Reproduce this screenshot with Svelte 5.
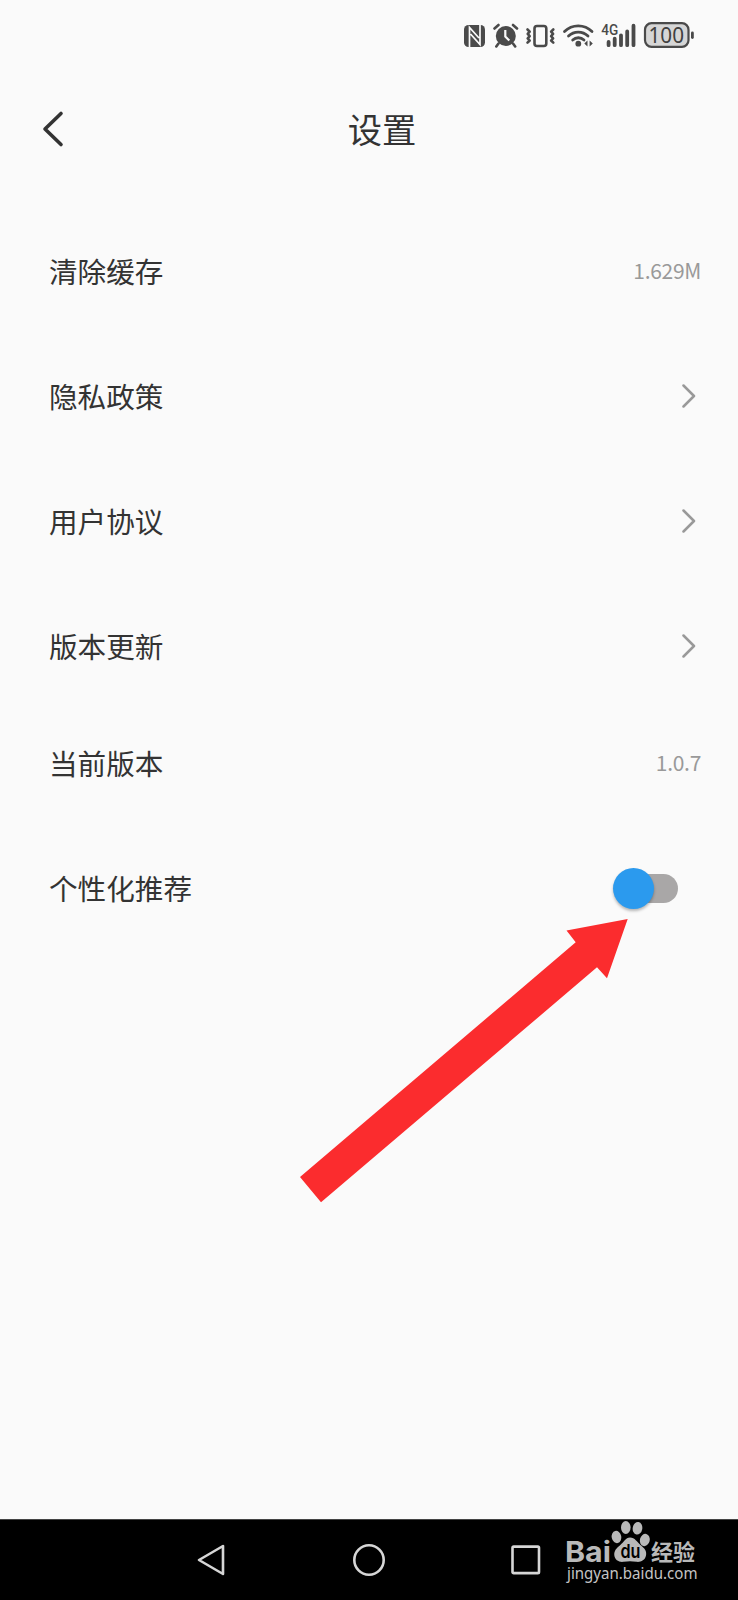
<script lang="ts">
	type Row = { label: string; value?: string; toggle?: boolean };

	// Second group sits slightly tighter to the first than the row pitch.
	const groups: Row[][] = [
		[
			{ label: '清除缓存', value: '1.629M' },
			{ label: '隐私政策' },
			{ label: '用户协议' },
			{ label: '版本更新' }
		],
		[
			{ label: '当前版本', value: '1.0.7' },
			{ label: '个性化推荐', toggle: true }
		]
	];

	let personalised = $state(false);
</script>

<div class="screen">
	<div class="status">
		<svg class="status-icons" width="240" height="32" viewBox="460 20 240 32" aria-hidden="true">
			<!-- NFC -->
			<rect x="464" y="25" width="21" height="22" rx="4.5" fill="#4a4a4a" />
			<path d="M469.500 47v-19.500l9.500 10.500M480 25v19.500l-9.500-10.500" fill="none" stroke="#fafafa" stroke-width="1.700" />
			<!-- Alarm -->
			<circle cx="505.800" cy="36" r="10" fill="#4a4a4a" />
			<path d="M494.500 28.500l4-3.500M517 28.500l-4-3.500M498.500 43.500l-2.200 3M513 43.500l2.200 3" class="line" />
			<path d="M505.300 30v6.500l4 4" fill="none" stroke="#fafafa" stroke-width="2.200" />
			<!-- Vibrate -->
			<rect x="534.500" y="26" width="11.800" height="20" rx="2.500" class="line" />
			<path d="M527.500 29.500l2.200 2.200-2 2.200 2 2.200-2 2.200 2 2.200-2.200 2.200M553.300 29.500l-2.200 2.200 2 2.200-2 2.200 2 2.200-2 2.200 2.200 2.200" class="line" />
			<!-- Wi-Fi -->
			<path d="M564.500 31.500a19.500 19.500 0 0 1 27.500 0M568.500 36a14 14 0 0 1 19.500 0M572.700 40a8.200 8.200 0 0 1 11.300 0" class="line wifi" />
			<circle cx="578.300" cy="43.700" r="2.900" fill="#4a4a4a" />
			<path d="M584.300 43.500l3.200-3v6zM592.800 43.500l-3.200-3v6z" fill="#4a4a4a" />
			<!-- Signal -->
			<text x="601.300" y="35" class="net" textLength="17" lengthAdjust="spacingAndGlyphs">4G</text>
			<path d="M608.600 42v3.200M614.700 38.700v6.500M621 35.300v9.900M627.200 31.500v13.700M633.500 25.700v19.500" class="line bars" />
			<!-- Battery -->
			<rect x="645" y="23.200" width="43.500" height="23.600" rx="6.500" fill="#d6d6d6" stroke="#4a4a4a" stroke-width="2.200" />
			<text x="648.500" y="42.600" class="charge" textLength="35.500" lengthAdjust="spacingAndGlyphs">100</text>
			<path d="M692.400 33v4.500" class="line bars nub" />
		</svg>
	</div>

	<header class="header">
		<button type="button" class="back" aria-label="返回">
			<svg width="24" height="40" viewBox="0 0 24 40">
				<path d="M21 4.500L5 20 21 35.500" />
			</svg>
		</button>
		<h1>设置</h1>
	</header>

	<main class="list">
		{#each groups as group}
			<section class="group">
				{#each group as row (row.label)}
					<div class="row">
						<span class="label">{row.label}</span>
						{#if row.value}
							<span class="value">{row.value}</span>
						{:else if row.toggle}
							<button
								type="button"
								class="switch"
								class:on={personalised}
								role="switch"
								aria-checked={personalised}
								aria-label={row.label}
								onclick={() => (personalised = !personalised)}
							>
								<span class="thumb"></span>
							</button>
						{:else}
							<svg class="chevron" width="14" height="26" viewBox="0 0 14 26">
								<path d="M1.500 2.500L12 13 1.500 23.500" />
							</svg>
						{/if}
					</div>
				{/each}
			</section>
		{/each}
	</main>

	<nav class="nav">
		<svg width="30" height="36" viewBox="0 0 30 36">
			<path d="M28 4v28L4 18z" />
		</svg>
		<svg width="36" height="36" viewBox="0 0 36 36">
			<circle cx="18" cy="18" r="14.700" />
		</svg>
		<svg width="32" height="36" viewBox="0 0 32 36">
			<rect x="-.5" y="4.600" width="26.500" height="26.500" rx="1.200" />
		</svg>
	</nav>

	<!-- Pointer drawn over the list, aimed at the switch -->
	<svg class="arrow" width="330" height="286" viewBox="299 918 330 286" aria-hidden="true">
		<path d="M627.700 919L566.500 930.500 575.700 942.300 300 1177 321 1202.300 597 967.300 607 978.300z" fill="#fb2c2e" />
	</svg>

	<svg class="watermark" width="140" height="72" viewBox="562 1515 140 72" aria-hidden="true">
		<g fill="#b9b9b9">
			<ellipse cx="616.500" cy="1537" rx="4.800" ry="6.200" transform="rotate(-12 616.500 1537)" />
			<ellipse cx="625.800" cy="1527.500" rx="4.800" ry="6.500" />
			<ellipse cx="637.500" cy="1528.300" rx="4.800" ry="6.300" transform="rotate(10 637.500 1528.300)" />
			<ellipse cx="644.800" cy="1540" rx="4.900" ry="6.200" transform="rotate(14 644.800 1540)" />
			<path d="M630 1537.500c5 0 7 4.500 10.500 7.500 4 3.300 6.500 6 5.500 10.500-1 5-5.500 6.800-9.500 6.300-5-.7-8-.7-13 0-4.500.6-8.700-1.800-9.200-6.500-.4-4.500 2.200-7.200 6-10.300 3.500-2.800 5.200-7.500 9.700-7.500z" />
		</g>
		<text x="565" y="1561.500" class="brand" textLength="46" lengthAdjust="spacingAndGlyphs">Bai</text>
		<text x="620.500" y="1558" class="du" textLength="20" lengthAdjust="spacingAndGlyphs">du</text>
		<text x="651" y="1559.500" class="brand-cn">经验</text>
		<text x="567" y="1579" class="site" textLength="130.500" lengthAdjust="spacingAndGlyphs">jingyan.baidu.com</text>
	</svg>
</div>

<style>
	:global(body) {
		background: #fafafa;
	}

	.screen {
		position: relative;
		display: flex;
		flex-direction: column;
		width: 738px;
		height: 1600px;
		overflow: hidden;
		background: #fafafa;
		color: #333;
		font-family: 'Noto Sans', 'Noto Sans CJK SC', sans-serif;
	}

	button {
		padding: 0;
		border: 0;
		background: none;
	}

	.status {
		display: flex;
		justify-content: flex-end;
		align-items: center;
		height: 72px;
		padding-right: 38px;
	}

	.line {
		fill: none;
		stroke: #4a4a4a;
		stroke-width: 2.6;
		stroke-linecap: round;
		stroke-linejoin: round;
	}

	.wifi {
		stroke-width: 2.8;
	}

	.bars {
		stroke-width: 3.8;
	}

	.nub {
		stroke-width: 2.8;
	}

	.net {
		font: 500 15.5px Roboto, sans-serif;
		fill: #4a4a4a;
	}

	.charge {
		font: 400 22.5px 'Noto Sans', sans-serif;
		fill: #404040;
	}

	.header {
		display: grid;
		grid-template-columns: 60px 1fr 34px;
		align-items: center;
		height: 113px;
		padding: 0 0 0 40px;
	}

	.back {
		display: flex;
	}

	.back path {
		fill: none;
		stroke: #333;
		stroke-width: 3.6;
		stroke-linecap: round;
		stroke-linejoin: round;
	}

	h1 {
		margin: 0;
		padding: 0 40px 2px 0;
		font-family: 'Noto Sans CJK SC', sans-serif;
		font-size: 34.3px;
		font-weight: 400;
		line-height: 48px;
		text-align: center;
	}

	.list {
		flex: 1;
		padding: 23px 37px 0 49px;
	}

	.group + .group {
		margin-top: -8px;
	}

	.row {
		display: flex;
		align-items: center;
		justify-content: space-between;
		height: 125px;
	}

	.label {
		font-family: 'Noto Sans CJK SC', sans-serif;
		font-size: 28.6px;
		line-height: 40px;
	}

	.value {
		padding-bottom: 1px;
		font-family: 'Noto Sans CJK SC', sans-serif;
		font-size: 21px;
		line-height: 30px;
		letter-spacing: -0.3px;
		color: #999;
	}

	.chevron {
		margin-right: 5px;
	}

	.chevron path {
		fill: none;
		stroke: #999;
		stroke-width: 2.5;
		stroke-linecap: round;
		stroke-linejoin: round;
	}

	.switch {
		display: flex;
		align-items: center;
		width: 58px;
		height: 29px;
		margin: 2px 23px 0 0;
		border-radius: 15px;
		background: #a9a7a7;
	}

	.switch.on {
		justify-content: flex-end;
	}

	.thumb {
		flex: none;
		width: 41px;
		height: 41px;
		margin: 0 -7px;
		border-radius: 50%;
		background: #2b9aee;
		box-shadow: 0 2px 3px rgba(0, 0, 0, 0.28);
	}

	.nav {
		display: flex;
		align-items: center;
		gap: 126px;
		box-sizing: border-box;
		height: 81px;
		padding-left: 195px;
		border-top: 1px solid #444;
		background: #000;
	}

	.nav svg {
		overflow: visible;
	}

	.nav path,
	.nav circle,
	.nav rect {
		fill: none;
		stroke: #d6d6d6;
		stroke-width: 2.6;
		stroke-linejoin: round;
	}

	.arrow {
		position: absolute;
		top: 918px;
		left: 299px;
		pointer-events: none;
	}

	.watermark {
		position: absolute;
		top: 1515px;
		left: 562px;
		pointer-events: none;
	}

	.brand {
		font: 700 29px Inter, sans-serif;
		fill: #b9b9b9;
	}

	.du {
		font: 600 19px Inter, sans-serif;
		fill: #000;
	}

	.brand-cn {
		font: 700 22px 'Noto Sans CJK SC', sans-serif;
		fill: #b9b9b9;
	}

	.site {
		font: 400 15.5px 'Noto Sans', sans-serif;
		fill: #c4c4c4;
	}
</style>
